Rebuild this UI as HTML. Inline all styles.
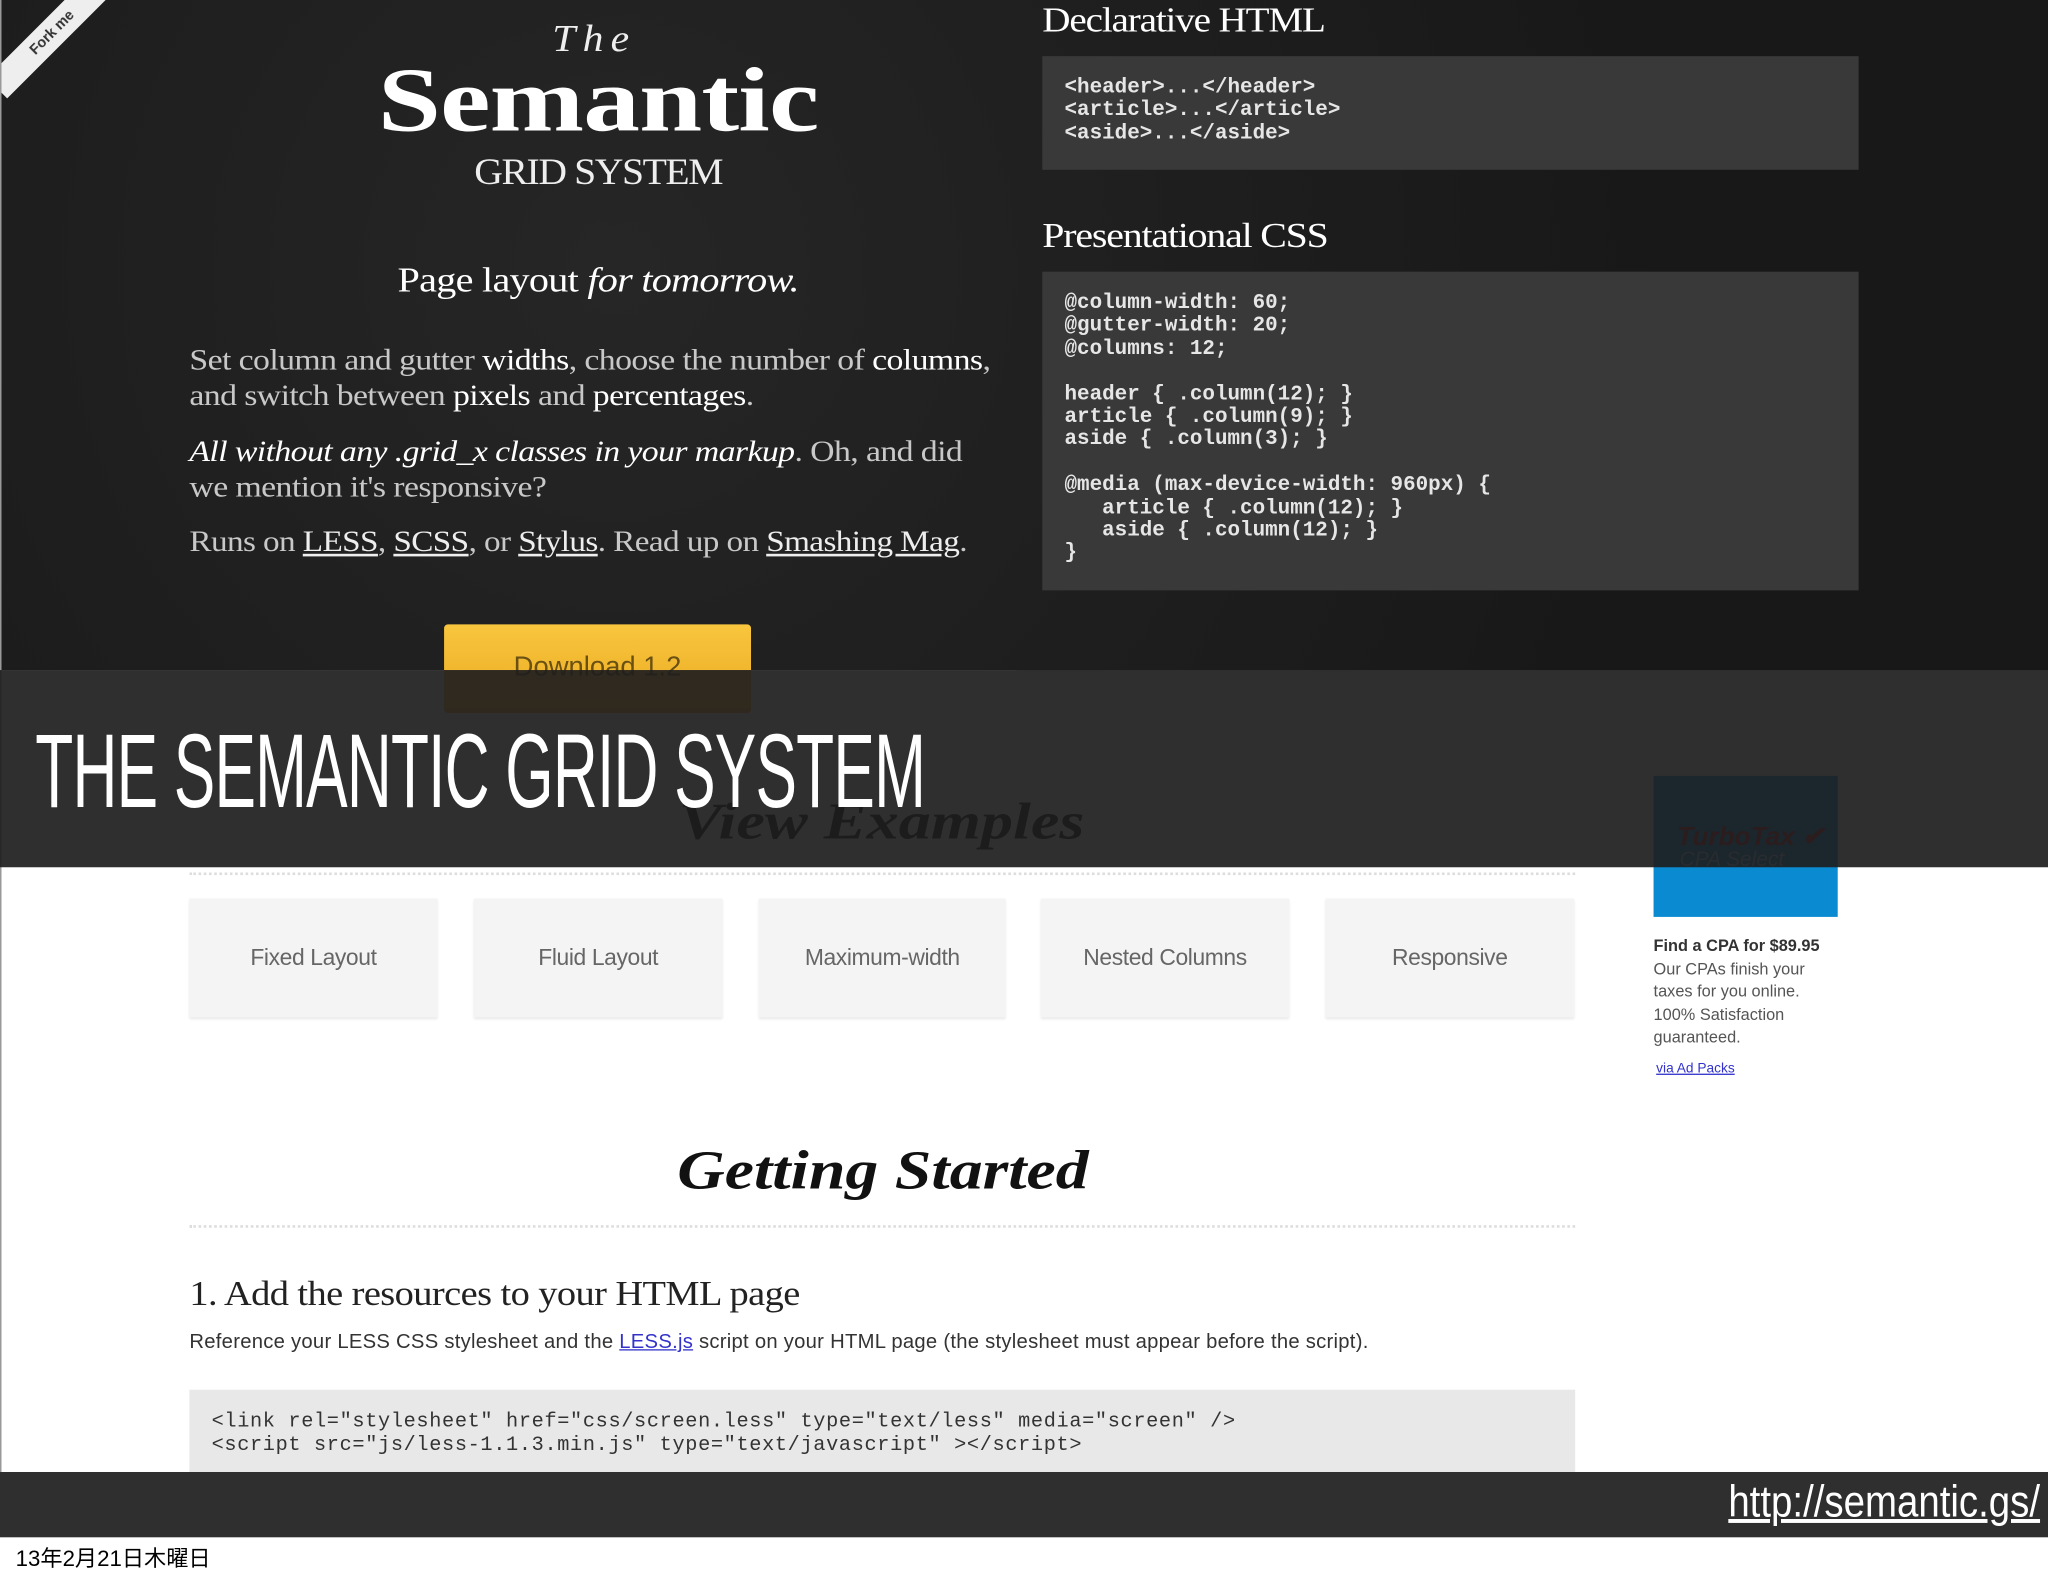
<!DOCTYPE html>
<html><head><meta charset="utf-8"><style>
html,body{margin:0;padding:0;background:#fff;width:2048px;height:1576px;overflow:hidden}
#w{position:absolute;left:0;top:0;width:1568px;height:1207px;transform:scale(1.30612);transform-origin:0 0;font-family:"Liberation Serif",serif}
.a{position:absolute;white-space:nowrap}
.top{position:absolute;left:0;top:0;width:1568px;height:513px;background:#1c1c1c;background-image:radial-gradient(circle at 30% 40%,#262626,#181818 70%)}
.code{position:absolute;background:#3a393a;font-family:"Liberation Mono",monospace;font-size:16px;line-height:17.4px;color:#e6e6e6;font-weight:bold;padding:16px 17px;box-sizing:border-box;white-space:pre}
.p{font-size:22.5px;color:#c8c8c8;letter-spacing:-0.4px;transform:scaleX(1.15);transform-origin:0 0}
.p b{color:#fff;font-weight:normal}
.p u{color:#eee}
.sx{transform-origin:50% 0}
.btn{position:absolute;top:688px;height:91px;width:190px;background:#f4f4f4;color:#666;font-family:"Liberation Sans",sans-serif;font-size:17.5px;text-align:center;line-height:91px;box-shadow:0 1px 2px #e6e6e6;letter-spacing:-0.3px}
.dot{position:absolute;left:145px;width:1061px;border-top:2px dotted #ddd}
.ad{font-family:"Liberation Sans",sans-serif;font-size:12.5px;color:#555;line-height:17.5px}
</style></head><body><div id="w">
<div class="top"></div>
<div class="a" style="width:120px;height:22px;background:#eee;transform:rotate(-45deg);font:bold 11px 'Liberation Sans',sans-serif;color:#333;line-height:22px;text-align:center;left:-20px;top:14px">Fork me</div>
<div class="a" style="left:0;top:0;width:1px;height:1127px;background:#999"></div>

<div class="a sx" style="left:355px;width:200px;text-align:center;top:14px;font-size:29px;font-style:italic;color:#eee;letter-spacing:5px;transform:scaleX(1.1)">The</div>
<div class="a sx" style="left:258px;width:400px;text-align:center;top:38px;font-size:70px;font-weight:bold;color:#fff;letter-spacing:-0.5px;transform:scaleX(1.24)">Semantic</div>
<div class="a sx" style="left:308px;width:300px;text-align:center;top:117px;font-size:28px;color:#eee;letter-spacing:-1px;transform:scaleX(1.085)">GRID SYSTEM</div>
<div class="a sx" style="left:258px;width:400px;text-align:center;top:199px;font-size:27px;color:#fff;letter-spacing:-0.5px;transform:scaleX(1.14)">Page layout <i>for tomorrow.</i></div>
<div class="a p" style="left:145px;top:262px;line-height:27px">Set column and gutter <b>widths</b>, choose the number of <b>columns</b>,<br>and switch between <b>pixels</b> and <b>percentages</b>.</div>
<div class="a p" style="left:145px;top:332px;line-height:27px"><i style="color:#fff">All without any .grid_x classes in your markup</i>. Oh, and did<br>we mention it's responsive?</div>
<div class="a p" style="left:145px;top:402px;transform:scaleX(1.13)">Runs on <u>LESS</u>, <u>SCSS</u>, or <u>Stylus</u>. Read up on <u>Smashing Mag</u>.</div>

<div class="a" style="left:798px;top:0px;font-size:27px;color:#fff;letter-spacing:-0.8px;transform:scaleX(1.11);transform-origin:0 0">Declarative HTML</div>
<div class="code" style="left:798px;top:43px;width:625px;height:87px">&lt;header&gt;...&lt;/header&gt;
&lt;article&gt;...&lt;/article&gt;
&lt;aside&gt;...&lt;/aside&gt;</div>
<div class="a" style="left:798px;top:165px;font-size:27px;color:#fff;letter-spacing:-0.8px;transform:scaleX(1.13);transform-origin:0 0">Presentational CSS</div>
<div class="code" style="left:798px;top:208px;width:625px;height:244px">@column-width: 60;
@gutter-width: 20;
@columns: 12;

header { .column(12); }
article { .column(9); }
aside { .column(3); }

@media (max-device-width: 960px) {
   article { .column(12); }
   aside { .column(12); }
}</div>

<div class="a" style="left:340px;top:478px;width:235px;height:68px;background:linear-gradient(#f8c63e,#eaa920);border-radius:3px"></div>
<div class="a" style="left:340px;top:499px;width:235px;text-align:center;font:21px 'Liberation Sans',sans-serif;color:#6a5012">Download 1.2</div>
<div class="a" style="left:520px;top:605px;font-size:40px;font-weight:bold;font-style:italic;color:#111;transform:scaleX(1.23);transform-origin:0 0">View Examples</div>
<div class="a" style="left:1266px;top:594px;width:141px;height:108px;background:#0a8ad0"></div>
<div class="a" style="left:1284px;top:628px;font:bold italic 20px 'Liberation Sans',sans-serif;color:#c01818">TurboTax ✔</div>
<div class="a" style="left:1286px;top:650px;font:italic 16px 'Liberation Sans',sans-serif;color:#9fd3ef">CPA Select</div>

<div class="a" style="left:0;top:513px;width:1568px;height:151px;background:rgba(30,29,30,0.92)"></div>
<div class="a" style="left:27px;top:545px;font:80px 'Liberation Sans',sans-serif;color:#fff;transform:scaleX(0.595);transform-origin:0 0;letter-spacing:-1px">THE SEMANTIC GRID SYSTEM</div>

<div class="dot" style="top:668px"></div>
<div class="btn" style="left:145px">Fixed Layout</div>
<div class="btn" style="left:363px">Fluid Layout</div>
<div class="btn" style="left:581px;width:189px">Maximum-width</div>
<div class="btn" style="left:797px">Nested Columns</div>
<div class="btn" style="left:1015px">Responsive</div>
<div class="a ad" style="left:1266px;top:716px"><b style="color:#333">Find a CPA for $89.95</b><br>Our CPAs finish your<br>taxes for you online.<br>100% Satisfaction<br>guaranteed.</div>
<div class="a" style="left:1268px;top:812px;font:10.5px 'Liberation Sans',sans-serif;color:#33c;text-decoration:underline">via Ad Packs</div>

<div class="a sx" style="left:376px;width:600px;text-align:center;top:873px;font-size:42px;font-weight:bold;font-style:italic;color:#111;transform:scaleX(1.2)">Getting Started</div>
<div class="dot" style="top:938px"></div>
<div class="a" style="left:145px;top:975px;font-size:26.5px;color:#222;letter-spacing:-0.4px;transform:scaleX(1.11);transform-origin:0 0">1. Add the resources to your HTML page</div>
<div class="a" style="left:145px;top:1019px;font:15.5px 'Liberation Sans',sans-serif;color:#333;letter-spacing:0.2px">Reference your LESS CSS stylesheet and the <u style="color:#33c">LESS.js</u> script on your HTML page (the stylesheet must appear before the script).</div>
<div class="a" style="left:145px;top:1064px;width:1061px;height:63px;background:#e8e8e8"></div>
<div class="a" style="left:162px;top:1079px;font:15.5px 'Liberation Mono',monospace;color:#333;line-height:18px;white-space:pre;letter-spacing:0.5px">&lt;link rel="stylesheet" href="css/screen.less" type="text/less" media="screen" /&gt;
&lt;script src="js/less-1.1.3.min.js" type="text/javascript" &gt;&lt;/script&gt;</div>

<div class="a" style="left:0;top:1127px;width:1568px;height:50px;background:#302f30"></div>
<div class="a" style="right:6px;top:1131px;font:34px 'Liberation Sans',sans-serif;color:#fff;text-decoration:underline;transform:scaleX(0.865);transform-origin:100% 0">http://semantic.gs/</div>
<div class="a" style="left:12px;top:1179px;font:17px 'Liberation Sans','Noto Sans CJK JP',sans-serif;color:#000">13年2月21日木曜日</div>
</div></body></html>
